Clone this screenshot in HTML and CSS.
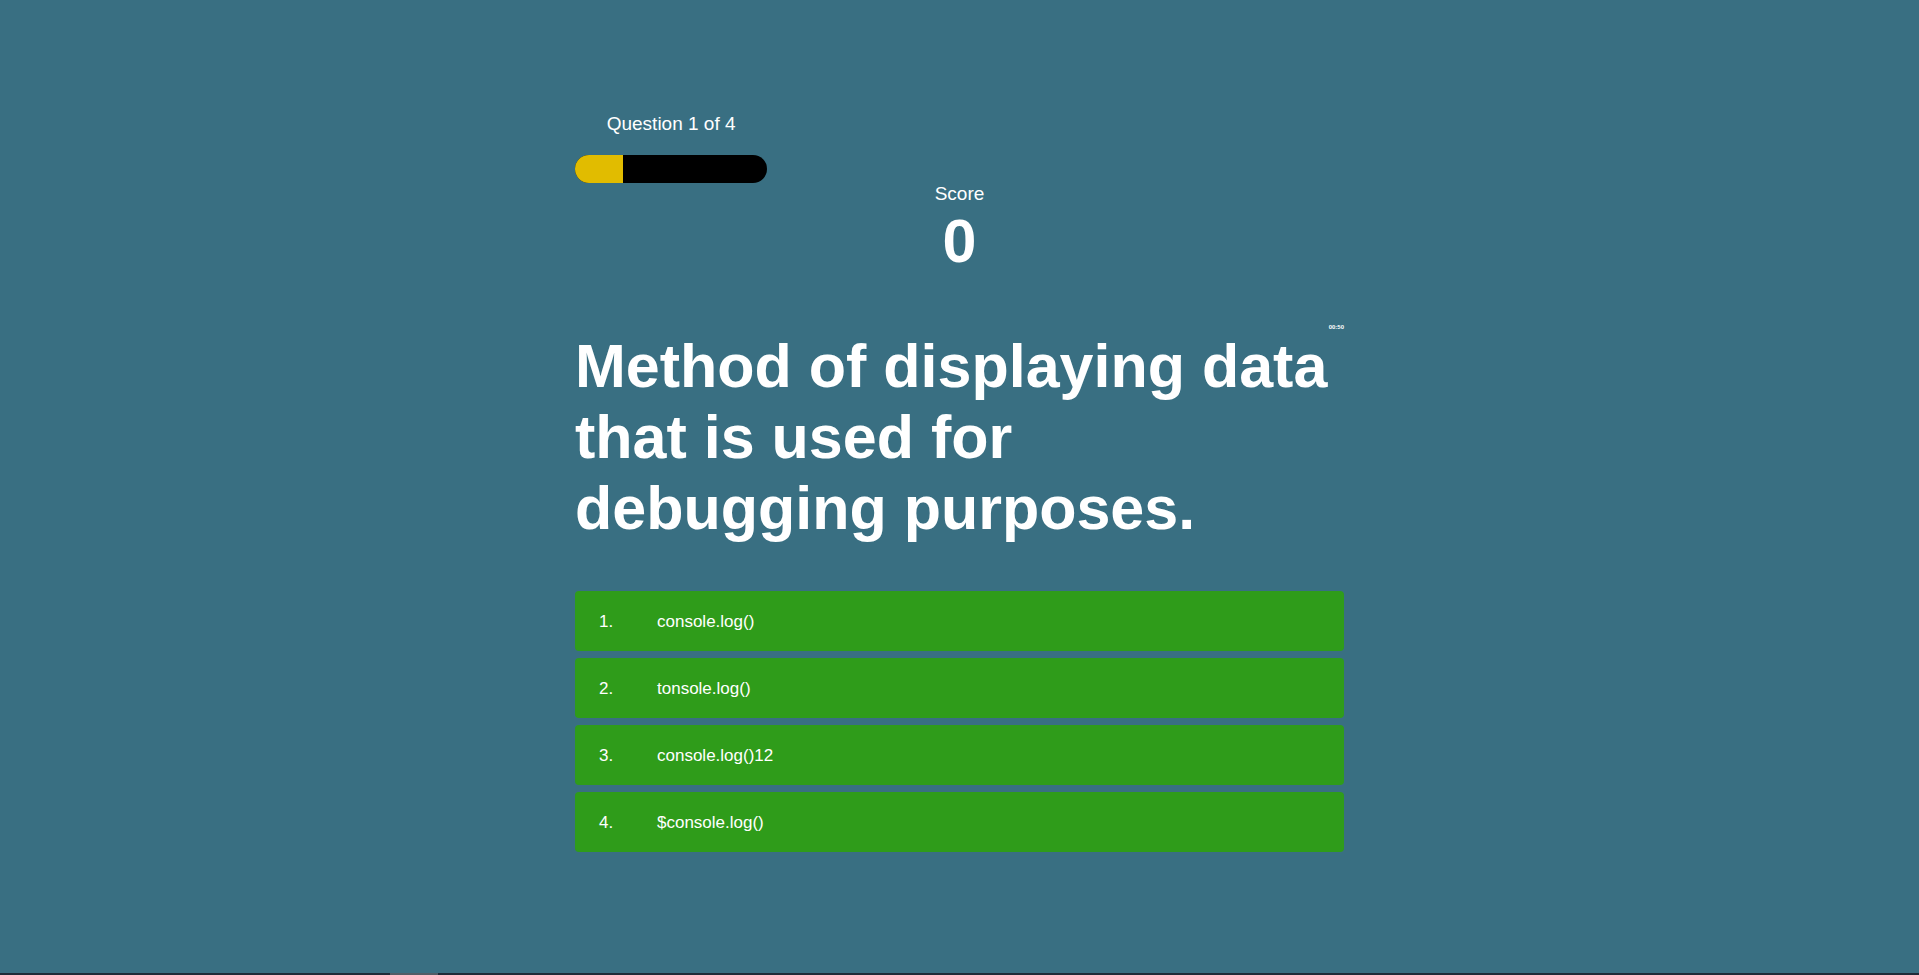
FILE: index.html
```html
<!DOCTYPE html>
<html lang="en">
<head>
  <meta charset="utf-8">
  <meta name="viewport" content="width=device-width, initial-scale=1">
  <title>Quiz</title>
  <link rel="stylesheet" href="styles.css">
</head>
<body>
  <main class="quiz">
    <header class="hud">
      <div class="progress">
        <p class="label" id="progress-text">Question 1 of 4</p>
        <div class="progress-bar" role="progressbar" aria-labelledby="progress-text" aria-valuemin="0" aria-valuemax="4" aria-valuenow="1">
          <div class="progress-fill" style="width: 25%"></div>
        </div>
      </div>
      <div class="score">
        <p class="label">Score</p>
        <p class="score-value">0</p>
      </div>
    </header>
    <p class="timer">00:50</p>
    <h1 class="question">Method of displaying data that is used for <br>debugging purposes.</h1>
    <div class="choices">
      <button class="choice" type="button"><span class="choice-number">1.</span><span>console.log()</span></button>
      <button class="choice" type="button"><span class="choice-number">2.</span><span>tonsole.log()</span></button>
      <button class="choice" type="button"><span class="choice-number">3.</span><span>console.log()12</span></button>
      <button class="choice" type="button"><span class="choice-number">4.</span><span>$console.log()</span></button>
    </div>
  </main>
  <div class="bottom-strip"><div class="bottom-strip-tab"></div></div>
</body>
</html>
```
FILE: styles.css
```css
* {
  box-sizing: border-box;
  margin: 0;
}

body {
  display: flex;
  flex-direction: column;
  min-height: 100vh;
  background: #396f82;
  color: #fff;
  font-family: "Liberation Sans", Arial, sans-serif;
}

.quiz {
  flex: 1;
  width: 100%;
  max-width: 769px;
  margin: 0 auto;
  padding-top: 113px;
}

.hud {
  display: flex;
  flex-direction: column;
}

.progress {
  width: 25%;
}

.label {
  font-size: 19px;
  line-height: 22px;
  text-align: center;
}

.progress-bar {
  height: 28px;
  margin-top: 20px;
  overflow: hidden;
  border-radius: 14px;
  background: #000;
}

.progress-fill {
  height: 100%;
  background: #e1bc00;
}

.score {
  text-align: center;
}

.score-value {
  margin-top: 1px;
  font-size: 61px;
  font-weight: bold;
  line-height: 71px;
}

.timer {
  margin-top: 47px;
  font-size: 6px;
  font-weight: bold;
  line-height: 7px;
  text-align: right;
}

.question {
  font-size: 61px;
  line-height: 71px;
}

.choices {
  display: flex;
  flex-direction: column;
  gap: 7px;
  margin-top: 47px;
}

.choice {
  display: flex;
  align-items: center;
  width: 100%;
  padding: 21px 24px 19px;
  border: 0;
  border-radius: 4px;
  background: #2f9c1a;
  color: #fff;
  font: 17px/20px "Liberation Sans", Arial, sans-serif;
  text-align: left;
  cursor: pointer;
}

.choice-number {
  width: 58px;
}

.bottom-strip {
  height: 2px;
  padding-left: 390px;
  background: #1f2b38;
}

.bottom-strip-tab {
  width: 48px;
  height: 100%;
  background: #525d66;
}
```
